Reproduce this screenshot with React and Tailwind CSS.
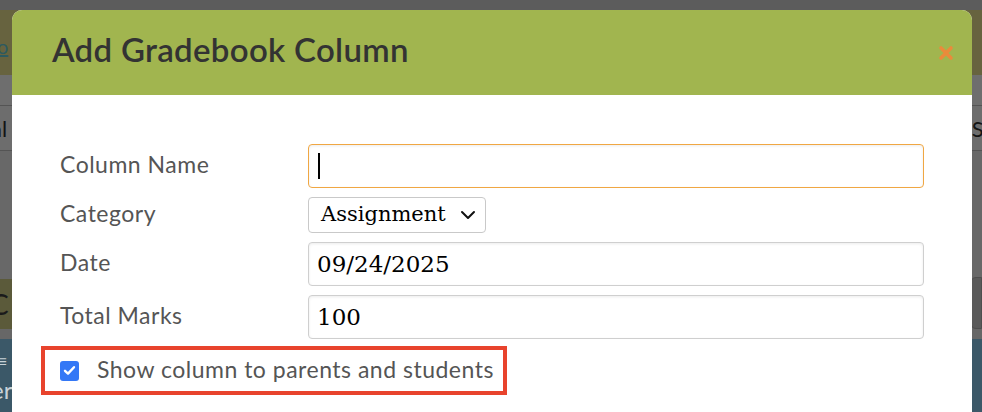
import React from 'react';

const sans = { fontFamily: '"Lato", "Liberation Sans", sans-serif' };
const serif = { fontFamily: '"DejaVu Serif", "Liberation Serif", serif' };

// Thick orange close cross in the header
function CloseIcon() {
  return (
    <svg width="16" height="16" viewBox="0 0 16 16" aria-hidden="true">
      <path d="M3 3 L13 13 M13 3 L3 13" stroke="#ea8b3b" strokeWidth="3.6" strokeLinecap="round" />
    </svg>
  );
}

function FormRow({ label, children }) {
  return (
    <div className="flex items-center">
      <label className="w-[248px] shrink-0 pb-[5px] text-[23px] leading-[28px] tracking-[0.5px] text-[#555555]">{label}</label>
      {children}
    </div>
  );
}

export default function App() {
  return (
    <div className="relative w-[982px] h-[412px] overflow-hidden bg-[#676767]" style={sans}>
      {/* dimmed page behind the modal */}
      <div className="flex flex-col">
        <div className="h-[10px] bg-[#5c5c5c]"></div>
        <div className="h-[65px] bg-[#67633f] flex items-center">
          <span className="-ml-[3px] mt-[6px] text-[20px] text-[#2c5a60] underline">o</span>
        </div>
        <div className="h-[30px] bg-[#6e6e6e]"></div>
        <div className="h-[46px] border-y border-[#545454] bg-[#6d6d6d] flex items-center justify-between">
          <span className="-ml-[9px] text-[22px] text-[#141414]">al</span>
          <span className="-mr-[12px] text-[22px] text-[#141414]">Sc</span>
        </div>
        <div className="h-[128px] bg-[#686868]"></div>
        <div className="h-[50px] flex justify-between">
          <div className="w-[40px] bg-[#5b5a3a] flex items-center">
            <span className="-ml-[10px] text-[28px] text-[#1a1a1a]">C</span>
          </div>
          <div className="w-[12px] mt-[-2px] rounded-l-[6px] bg-[#5a5a5a] border border-[#4e4e4e]"></div>
        </div>
        <div className="h-[10px]"></div>
        <div className="h-[80px] bg-[#3b5868] flex flex-col justify-center">
          <span className="-ml-[2px] text-[16px] leading-[10px] text-[#c8d2d8]">≡</span>
          <span className="-ml-[9px] mt-[12px] text-[24px] leading-none text-[#c8d2d8]">er</span>
        </div>
      </div>

      {/* modal */}
      <div className="absolute left-[12px] top-[10px] w-[960px] h-[420px] bg-white rounded-t-[10px] overflow-hidden">
        <div className="h-[85px] bg-[#a1b54f] flex items-center justify-between pl-[40px] pr-[18px]">
          <h1 className="text-[33px] font-semibold tracking-[0.3px] text-[#333333] pb-[6px]">Add Gradebook Column</h1>
          <CloseIcon />
        </div>

        <div className="px-[48px] pt-[49px] flex flex-col gap-[9px]">
          <FormRow label="Column Name">
            <div className="flex-1 h-[44px] rounded-[4px] border border-[#f0a743] shadow-[inset_0_1px_3px_rgba(0,0,0,0.08)] flex items-center pl-[9px]">
              <span className="w-[2px] h-[26px] bg-black"></span>
            </div>
          </FormRow>
          <FormRow label="Category">
            <div className="w-[178px] h-[36px] rounded-[4px] border border-[#c9c9c9] flex items-center justify-between pl-[12px] pr-[9px]">
              <span className="text-[21px] text-black" style={serif}>Assignment</span>
              <svg width="16" height="10" viewBox="0 0 16 10" aria-hidden="true">
                <path d="M2 2 L8 8 L14 2" fill="none" stroke="#111" strokeWidth="2" strokeLinecap="round" strokeLinejoin="round" />
              </svg>
            </div>
          </FormRow>
          <FormRow label="Date">
            <div className="flex-1 h-[44px] rounded-[4px] border border-[#cfcfcf] shadow-[inset_0_1px_3px_rgba(0,0,0,0.08)] flex items-center pl-[8px]">
              <span className="text-[23px] text-black" style={serif}>09/24/2025</span>
            </div>
          </FormRow>
          <FormRow label="Total Marks">
            <div className="flex-1 h-[44px] rounded-[4px] border border-[#cfcfcf] shadow-[inset_0_1px_3px_rgba(0,0,0,0.08)] flex items-center pl-[8px]">
              <span className="text-[23px] text-black" style={serif}>100</span>
            </div>
          </FormRow>

          <div className="-ml-[19px] mt-[-2px] w-[466px] h-[49px] border-4 border-[#e8432d] flex items-center pl-[15px]">
            <span className="w-[19px] h-[20px] rounded-[3px] bg-[#3478f6] flex items-center justify-center">
              <svg width="13" height="11" viewBox="0 0 13 11" aria-hidden="true">
                <path d="M2 5.8 L5 8.6 L11 2.2" fill="none" stroke="white" strokeWidth="2.4" strokeLinecap="round" strokeLinejoin="round" />
              </svg>
            </span>
            <span className="ml-[18px] pb-[3px] text-[23px] leading-[28px] tracking-[0.5px] text-[#555555]">Show column to parents and students</span>
          </div>
        </div>
      </div>
    </div>
  );
}
